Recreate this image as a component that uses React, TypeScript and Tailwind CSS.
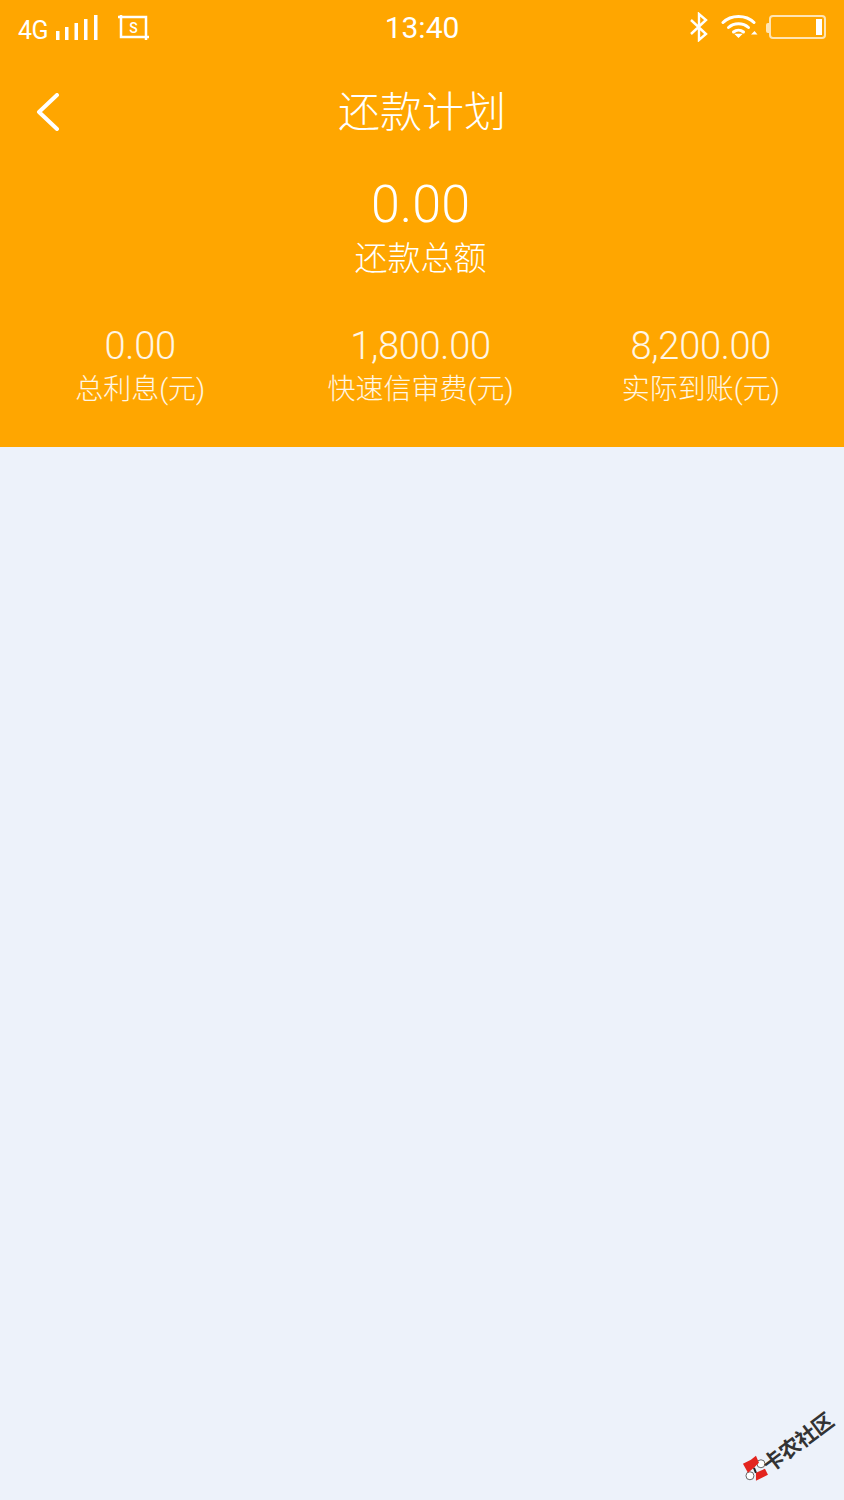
import React from 'react';

const FONT = 'font-["Roboto","Noto_Sans_CJK_SC",sans-serif]';

const stats = [
  { value: '0.00', label: '总利息(元)' },
  { value: '1,800.00', label: '快速信审费(元)' },
  { value: '8,200.00', label: '实际到账(元)' },
];

const StatusBar = () => (
  <div className="h-[56px] flex items-center justify-between pl-[18px] pr-[18px] relative">
    <div className="flex items-center">
      <span className="text-[25px] leading-none w-[34px] tracking-[-0.5px] mt-[4px]">4G</span>
      <svg width="44" height="26" viewBox="0 0 44 26" className="ml-[3px]" fill="#fff">
        <rect x="1" y="16" width="3.5" height="9" />
        <rect x="10" y="12" width="3.5" height="13" />
        <rect x="19.500" y="8" width="3.5" height="17" />
        <rect x="29" y="4" width="3.5" height="21" />
        <rect x="39" y="0" width="3.5" height="25" />
      </svg>
      <svg width="32" height="28" viewBox="0 0 32 28" className="ml-[18px]" fill="none" stroke="#fff" strokeWidth="2.5">
        <path d="M1 3h3M4 1v2h25v20M4 3v20h25M29 23h3M29 23v3" />
        <text x="16.5" y="18.5" textAnchor="middle" fontSize="14" fill="#fff" stroke="none" fontWeight="500" fontFamily="Roboto">S</text>
      </svg>
    </div>
    <span className="absolute left-0 right-0 text-center text-[30px] leading-none">13:40</span>
    <div className="flex items-center">
      <svg width="20" height="30" viewBox="0 0 20 30" fill="none" stroke="#fff" strokeWidth="2.4" className="mt-[-3px]">
        <path d="M2 8l15 14-7 6V2l7 6L2 22" />
      </svg>
      <svg width="38" height="24" viewBox="0 0 38 24" className="ml-[12px] mt-[-3px]" fill="none" stroke="#fff" strokeWidth="3" strokeLinecap="round">
        <path d="M2 7.5C10-.5 25-.5 33 7.5" />
        <path d="M7.500 12.500C13 7.500 22 7.500 27.500 12.500" />
        <path d="M12.500 17C15.500 14.500 19.500 14.500 22.500 17" />
        <path d="M17.500 22l-2.500-2.500h5z" fill="#fff" strokeWidth="1.500" />
        <path d="M30 19.500l3.500-3.500 3 3.500z" fill="#fff" stroke="none" />
      </svg>
      <div className="ml-[7px] w-[3px] h-[10px] bg-white/70 rounded-l-[2px]" />
      <div className="w-[57px] h-[24px] border-2 border-white/70 rounded-[4px] flex justify-end items-stretch p-[2px] mt-[-2px]">
        <div className="w-[6px] bg-white" />
      </div>
    </div>
  </div>
);

const Watermark = () => (
  <div className="absolute right-[2px] bottom-[34px] flex items-center -rotate-[37deg] origin-center">
    <svg width="30" height="30" viewBox="0 0 30 30" className="mr-[-3px] overflow-visible">
      <g transform="rotate(37 15 15) translate(0 -5)">
        <circle cx="20" cy="9" r="4" fill="#fff" stroke="#666" strokeWidth="1" />
        <circle cx="9" cy="21" r="4" fill="#fff" stroke="#666" strokeWidth="1" />
        <path d="M2 9l8-4 3 8-6 5zM10 5l5-4 3 7-5 5zM15 18l9-4 3 6-12 6z" fill="#e3241e" />
        <path d="M13 13l2 5" stroke="#222" strokeWidth="2" />
      </g>
    </svg>
    <span className="text-[21px] leading-none font-bold text-[#333] tracking-[-0.5px]">卡农社区</span>
  </div>
);

const App: React.FC = () => {
  return (
    <div className={`${FONT} w-[844px] h-[1500px] bg-[#edf2fa] relative overflow-hidden`}>
      <div className="h-[447px] bg-[#ffa600] text-white">
        <StatusBar />
        <div className="h-[110px] flex items-center justify-center relative">
          <svg width="24" height="38" viewBox="0 0 24 38" fill="none" stroke="#fff" strokeWidth="4" strokeLinecap="round" strokeLinejoin="round" className="absolute left-[36px] top-[37px]">
            <path d="M21 2L3 19l18 17" />
          </svg>
          <span className="text-[42px] leading-none font-light mt-[3px]">还款计划</span>
        </div>
        <div className="flex flex-col items-center font-light pr-[3px]">
          <span className="text-[52px] leading-none mt-[13px]">0.00</span>
          <span className="text-[33px] leading-none mt-[11px]">还款总额</span>
        </div>
        <div className="grid grid-cols-3 mt-[52px] pr-[3px] font-light">
          {stats.map(s => (
            <div key={s.label} className="flex flex-col items-center text-white/90">
              <span className="text-[38px] leading-none tracking-[-0.3px]">{s.value}</span>
              <span className="text-[28px] leading-none mt-[11px]">{s.label}</span>
            </div>
          ))}
        </div>
      </div>
      <Watermark />
    </div>
  );
};

export default App;
